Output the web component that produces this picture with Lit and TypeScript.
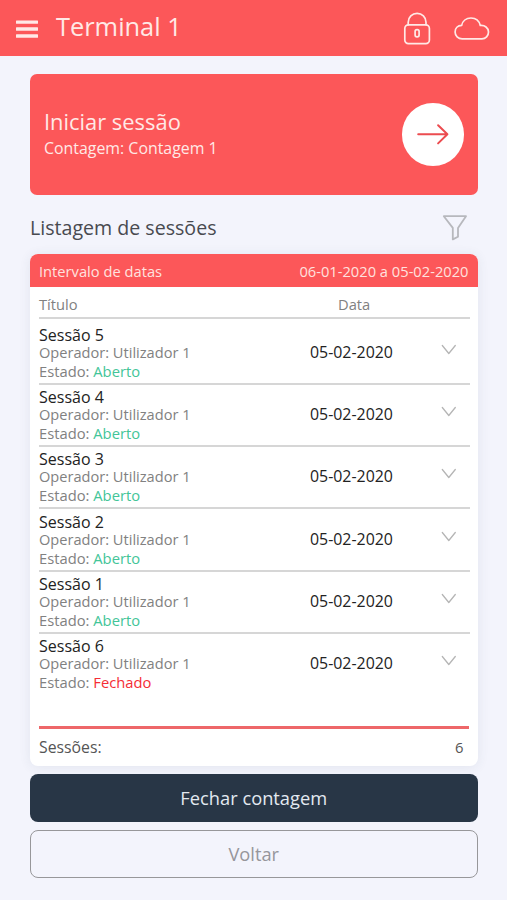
import { LitElement, html, css, svg } from "lit";
import { customElement, property } from "lit/decorators.js";
import { classMap } from "lit/directives/class-map.js";

interface Session {
  title: string;
  operator: string;
  open: boolean;
  date: string;
}

const sessions: Session[] = [5, 4, 3, 2, 1, 6].map((n) => ({
  title: `Sessão ${n}`,
  operator: "Utilizador 1",
  open: n !== 6,
  date: "05-02-2020",
}));

const stroke = (w: number, h: number, width: number, body: unknown) => html`<svg
  width=${w} height=${h} viewBox="0 0 ${w} ${h}" fill="none" stroke="currentColor"
  stroke-width=${width} stroke-linejoin="round" stroke-linecap="round">${body}</svg>`;

const menuIcon = html`<svg width="22" height="18" viewBox="0 0 22 18" fill="currentColor">
  <rect y="0.4" width="22" height="3.4" rx="0.5" /><rect y="7.3" width="22" height="3.4" rx="0.5" /><rect y="14.3" width="22" height="3.4" rx="0.5" /></svg>`;
const lockIcon = stroke(28, 33, 1.7, svg`<rect x="1.8" y="12.9" width="24.6" height="18.7" rx="3.6"/>
  <path d="M5.2 12.7V10.2a8.9 8.9 0 0 1 17.8 0v2.5"/><rect x="12.1" y="17.6" width="4" height="7.3" rx="1.9"/>`);
const cloudIcon = stroke(37, 25, 1.7, svg`<path d="M9.2 22.8h19.7a6.6 6.6 0 0 0 6.6-6.7c0-4.2-3.8-7.1-8.2-6.6C26.2 5 22.6 2 18 2c-4.9 0-8.5 3-9.3 7.4-4 .1-6.6 2.9-6.6 6.5 0 4 3 6.9 7.1 6.9z"/>`);
const arrowIcon = stroke(32, 22, 2, svg`<path d="M1.2 11.3h29M21.1 2.2l9.3 9.1-9.3 9.1"/>`);
const filterIcon = stroke(26, 27, 1.8, svg`<path d="M1.8 2.2h22.2L16 13.9v8.8l-5.2 2.7V13.9z"/>`);
const chevronIcon = stroke(16, 12, 1.3, svg`<path d="M1.3 1.5 7.8 9.5l6.5-8"/>`);

@customElement("session-row")
class SessionRow extends LitElement {
  @property({ attribute: false }) session!: Session;

  static styles = css`
    :host {
      display: grid;
      grid-template-columns: 230px 1fr 43px;
      height: 62.33px;
      box-sizing: border-box;
      border-bottom: 2px solid #d6d6d6;
      color: #818181;
      font-size: 14.6px;
    }
    :host(.last) { border-bottom-color: transparent; }
    .details { padding-top: 3.3px; white-space: nowrap; }
    .title { color: #222; font-size: 16px; line-height: 19px; }
    .line { line-height: 16px; margin-top: -1px; }
    .line + .line { line-height: 22px; margin-top: 0; font-size: 14.75px; }
    .state { color: #43c598; }
    .closed { color: #f52d35; }
    .date { color: #222; font-size: 15.9px; line-height: 20px; padding: 19.3px 0 0 41px; white-space: nowrap; }
    .toggle { color: #b5b5b5; padding: 21.3px 0 0 14px; }
    svg { display: block; }
  `;

  render() {
    const s = this.session;
    return html`
      <div class="details">
        <div class="title">${s.title}</div>
        <div class="line">Operador: ${s.operator}</div>
        <div class="line">Estado: <span class=${classMap({ state: true, closed: !s.open })}>${s.open ? "Aberto" : "Fechado"}</span></div>
      </div>
      <div class="date">${s.date}</div>
      <div class="toggle">${chevronIcon}</div>
    `;
  }
}

@customElement("app-root")
class AppRoot extends LitElement {
  static styles = css`
    :host {
      display: flex;
      flex-direction: column;
      height: 900px;
      background: #f3f4fc;
      font-family: "Open Sans", "Noto Sans", sans-serif;
      overflow: hidden;
    }
    * { box-sizing: border-box; }
    svg { display: block; flex: none; }
    .bar {
      display: flex;
      align-items: center;
      height: 56px;
      flex: none;
      padding: 0 17px 0 16px;
      background: #fc5759;
      color: #ffe9e6;
    }
    .bar > svg { margin-top: 1px; }
    .name { flex: 1; margin-left: 18px; font-size: 25.4px; line-height: 36px; padding-bottom: 4px; }
    .icons { display: flex; align-items: center; gap: 22px; }
    .content { display: flex; flex-direction: column; padding: 18px 29.5px 0 30px; }
    .start {
      display: flex;
      align-items: center;
      justify-content: space-between;
      height: 120.5px;
      padding: 0 13.5px 0 14px;
      border-radius: 7px;
      background: #fc5759;
      color: #ffe9e6;
    }
    .start-title { font-size: 21.9px; line-height: 30px; margin-top: -2px; }
    .start-sub { font-size: 15.9px; line-height: 22px; }
    .go {
      display: grid;
      place-items: center;
      width: 62.5px;
      height: 62.5px;
      border-radius: 50%;
      background: #fff;
      color: #ec4c50;
    }
    .go svg { margin-left: 1px; }
    .heading {
      display: flex;
      justify-content: space-between;
      align-items: center;
      height: 59px;
      padding: 6px 10px 0 0;
      color: #484a50;
      font-size: 19.6px;
    }
    .filter { color: #b7b8bd; }
    .panel {
      height: 512.5px;
      border-radius: 8px;
      background: #fff;
      box-shadow: 0 1px 12px rgba(60, 80, 100, 0.09);
      overflow: hidden;
    }
    .range {
      display: flex;
      justify-content: space-between;
      height: 33px;
      line-height: 35px;
      padding: 0 9px;
      background: #fc5759;
      color: #ffe2df;
      font-size: 14.7px;
    }
    .table { margin: 0 8px 0 9px; }
    .columns {
      display: grid;
      grid-template-columns: 299px 1fr;
      height: 32.2px;
      border-bottom: 2px solid #d6d6d6;
      color: #818181;
      font-size: 14.7px;
      line-height: 35px;
    }
    .rows { padding-top: 3.6px; }
    .total {
      display: flex;
      justify-content: space-between;
      margin: 29.5px 1px 0 0;
      padding-right: 5px;
      border-top: 3px solid #ee6769;
      color: #555;
      font-size: 15.8px;
      line-height: 37px;
    }
    .total span:last-child { font-size: 14.8px; }
    .button {
      display: grid;
      place-items: center;
      height: 48px;
      margin-top: 8px;
      padding: 0 6px 2px;
      border: 0;
      border-radius: 8px;
      background: #283646;
      color: #e3e9f0;
      font: inherit;
      font-size: 18.3px;
    }
    .outline { border: 1px solid #97979a; background: transparent; color: #96969b; }
  `;

  render() {
    return html`
      <header class="bar">
        ${menuIcon}
        <div class="name">Terminal 1</div>
        <div class="icons">${lockIcon}${cloudIcon}</div>
      </header>
      <main class="content">
        <section class="start">
          <div>
            <div class="start-title">Iniciar sessão</div>
            <div class="start-sub">Contagem: Contagem 1</div>
          </div>
          <div class="go">${arrowIcon}</div>
        </section>
        <div class="heading"><span>Listagem de sessões</span><span class="filter">${filterIcon}</span></div>
        <section class="panel">
          <div class="range"><span>Intervalo de datas</span><span>06-01-2020 a 05-02-2020</span></div>
          <div class="table">
            <div class="columns"><span>Título</span><span>Data</span></div>
            <div class="rows">
              ${sessions.map((s, i) => html`<session-row class=${classMap({ last: i === sessions.length - 1 })} .session=${s}></session-row>`)}
            </div>
            <div class="total"><span>Sessões:</span><span>${sessions.length}</span></div>
          </div>
        </section>
        <button class="button">Fechar contagem</button>
        <button class="button outline">Voltar</button>
      </main>
    `;
  }
}
